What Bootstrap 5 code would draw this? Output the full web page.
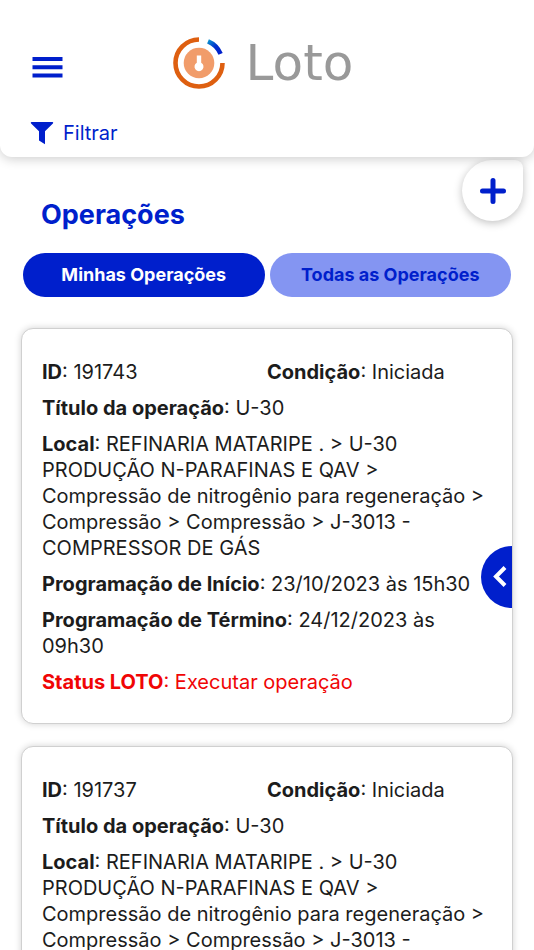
<!DOCTYPE html>
<html lang="pt-BR">
<head>
<meta charset="utf-8">
<meta name="viewport" content="width=device-width, initial-scale=1">
<title>Loto - Operações</title>
<link href="https://cdn.jsdelivr.net/npm/bootstrap@5.3.0/dist/css/bootstrap.min.css" rel="stylesheet">
<style>
:root { --loto-blue: #001fcc; --loto-soft: #8495f2; }
body { font-family: Inter, "Liberation Sans", sans-serif; font-size: 20px; line-height: 26px; color: #1c1c1c; background: #fff; }
.app-header { background: #fff; border-radius: 0 0 12px 12px; box-shadow: 0 2px 12px rgba(0,0,0,.2); padding: 36px 30px 11px; position: relative; z-index: 1; }
.brand-bar { display: grid; grid-template-columns: 1fr auto 1fr; align-items: center; }
.menu-btn { padding: 8px 0 0; justify-self: start; }
.brand-name { font-family: "DejaVu Sans", sans-serif; font-size: 50px; line-height: 54px; color: #999; }
.brand-link { gap: 20px; margin-right: 9px; }
.filter-btn { color: var(--loto-blue); font-size: 20px; line-height: 26px; margin-top: 30px; gap: 9px; }
.add-btn { width: 61px; height: 61px; margin: 3px 11px 0 0; background: #fff; border-radius: 50% 8px 50% 50%; box-shadow: 0 2px 8px rgba(0,0,0,.25); }
.page-title { color: var(--loto-blue); font-size: 27px; line-height: 32px; font-weight: 700; padding-top: 42px; margin: 0; }
.title-bar { padding-left: 41px; }
.tabs-bar { gap: 5px; padding: 0 23px; margin-top: 22px; }
.tab-btn { height: 44px; font-size: 18px; line-height: 24px; font-weight: 700; background: var(--loto-soft); color: var(--loto-blue); }
.tab-btn.active { background: var(--loto-blue); color: #fff; }
.op-list { padding: 31px 21px 22px; gap: 22px; }
.op-card { border: 1px solid #d0d0d0; border-radius: 12px; box-shadow: 0 0 7px rgba(0,0,0,.18); padding: 30px 20px 28px; color: inherit; }
.op-card strong { font-weight: 700; }
.op-fields { gap: 10px; }
.op-fields p { margin: 0; }
.op-status { color: #f00505; }
.side-btn { top: 217px; right: 0; width: 31px; height: 62px; border-radius: 31px 0 0 31px; background: var(--loto-blue); }
</style>
<script src="https://cdn.jsdelivr.net/npm/bootstrap@5.3.0/dist/js/bootstrap.bundle.min.js" defer></script>
</head>
<body>
<header class="app-header">
  <div class="brand-bar">
    <button type="button" class="menu-btn btn border-0 d-flex" aria-label="Menu">
      <svg width="36" height="30" viewBox="0 0 36 30" fill="#001fcc"><path d="M2.500 5h30v4h-30zM2.500 13.300h30v4h-30zM2.500 21.500h30v4h-30z"/></svg>
    </button>
    <a href="#" class="brand-link d-flex align-items-center text-decoration-none">
      <svg width="54" height="54" viewBox="0 0 54 54" fill="none" aria-hidden="true">
        <defs><linearGradient id="arc" x1="0" y1="0" x2="1" y2="1"><stop offset="0" stop-color="#0b8fd0"/><stop offset=".5" stop-color="#0030cc"/><stop offset="1" stop-color="#001fcc"/></linearGradient></defs>
        <path d="M27 3.500A23.500 23.500 0 1 0 50.500 27" stroke="#de5f10" stroke-width="4.600"/>
        <path d="M36 5.300A23.500 23.500 0 0 1 48.600 17.800" stroke="url(#arc)" stroke-width="4.600"/>
        <circle cx="27" cy="27" r="15.300" fill="#f19c6a"/>
        <path d="M24.800 19.500h4.400v7.200a4.500 4.500 0 1 1-4.400 0z" fill="#fff"/>
      </svg>
      <span class="brand-name">Loto</span>
    </a>
  </div>
  <button type="button" class="filter-btn btn p-0 border-0 d-flex align-items-center">
    <svg width="24" height="24" viewBox="0 0 24 24" fill="#001fcc" aria-hidden="true"><path d="M1.500 1h21c.8 0 .9.900.4 1.400L15 10.300V23.300L9 19.500V10.300L1.100 2.400C.6 1.900.7 1 1.500 1z"/></svg>
    <span>Filtrar</span>
  </button>
</header>
<main>
  <div class="title-bar d-flex justify-content-between align-items-start">
    <h1 class="page-title">Operações</h1>
    <button type="button" class="add-btn btn p-0 border-0 d-flex align-items-center justify-content-center" aria-label="Adicionar operação">
      <svg width="26" height="26" viewBox="0 0 26 26" stroke="#001fcc" stroke-width="5" stroke-linecap="round"><path d="M13 2.500v21M2.500 13h21"/></svg>
    </button>
  </div>
  <div class="tabs-bar d-flex">
    <button type="button" class="tab-btn active btn border-0 rounded-pill flex-fill w-50 p-0">Minhas Operações</button>
    <button type="button" class="tab-btn btn border-0 rounded-pill flex-fill w-50 p-0">Todas as Operações</button>
  </div>
  <section class="op-list d-flex flex-column" aria-label="Operações">
    <article class="op-card card">
      <div class="op-fields d-flex flex-column">
        <div class="row g-0"><p class="col-6"><strong>ID</strong>: 191743</p><p class="col-6"><strong>Condição</strong>: Iniciada</p></div>
        <p><strong>Título da operação</strong>: U-30</p>
        <p><strong>Local</strong>: REFINARIA MATARIPE . &gt; U-30 PRODUÇÃO N-PARAFINAS E QAV &gt; Compressão de nitrogênio para regeneração &gt; Compressão &gt; Compressão &gt; J-3013 - COMPRESSOR DE GÁS</p>
        <p><strong>Programação de Início</strong>: 23/10/2023 às 15h30</p>
        <p><strong>Programação de Término</strong>: 24/12/2023 às 09h30</p>
        <p class="op-status"><strong>Status LOTO</strong>: Executar operação</p>
      </div>
      <button type="button" class="side-btn btn p-0 border-0 position-absolute d-flex align-items-center justify-content-center" aria-label="Abrir ações">
        <svg width="20" height="24" viewBox="0 0 20 24" fill="none" stroke="#fff" stroke-width="4"><path d="M18 2.500L9 11.500l9 9"/></svg>
      </button>
    </article>
    <article class="op-card card">
      <div class="op-fields d-flex flex-column">
        <div class="row g-0"><p class="col-6"><strong>ID</strong>: 191737</p><p class="col-6"><strong>Condição</strong>: Iniciada</p></div>
        <p><strong>Título da operação</strong>: U-30</p>
        <p><strong>Local</strong>: REFINARIA MATARIPE . &gt; U-30 PRODUÇÃO N-PARAFINAS E QAV &gt; Compressão de nitrogênio para regeneração &gt; Compressão &gt; Compressão &gt; J-3013 -</p>
      </div>
    </article>
  </section>
</main>
</body>
</html>
